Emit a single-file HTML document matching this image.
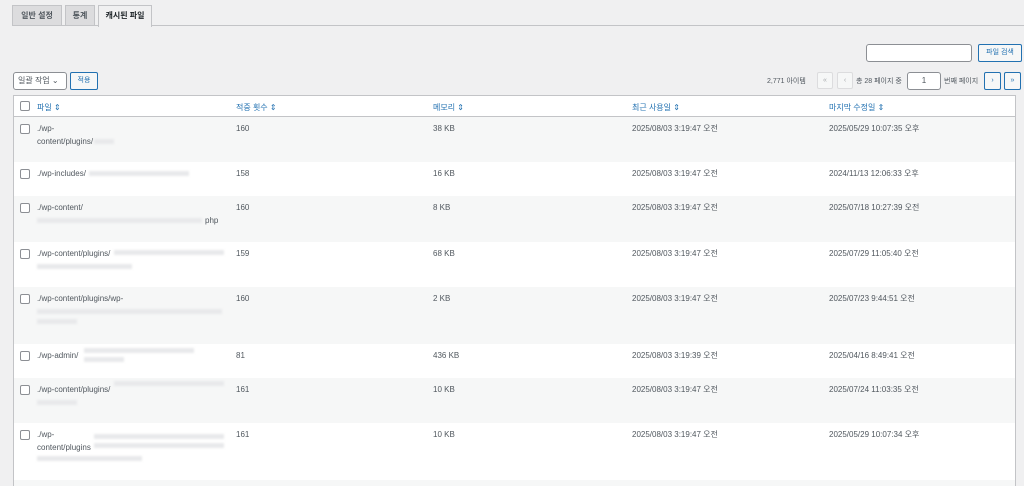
<!DOCTYPE html><html><head><meta charset="utf-8"><style>
body{margin:0;width:1024px;height:486px;background:#f0f0f1;font-family:"Liberation Sans","Noto Sans CJK KR",sans-serif;font-size:8px;color:#50575e;position:relative;overflow:hidden}
.a{position:absolute}
.tab{position:absolute;top:5px;height:20px;border:1px solid #c3c4c7;border-bottom:none;background:#dcdcde;font-weight:bold;font-size:8px;line-height:20px;text-align:center;color:#50575e}
.btn{position:absolute;border:1px solid #2271b1;border-radius:2px;background:#f6f7f7;color:#2271b1;text-align:center;font-size:7px}
.dis{position:absolute;border:1px solid #dcdcde;background:#f6f7f7;color:#a7aaad;text-align:center;font-size:7px;line-height:15px;width:14px;height:15px;border-radius:2px}
.row{position:absolute;left:14px;width:1001px}
.cb{position:absolute;left:6px;width:8px;height:8px;border:1px solid #8c8f94;border-radius:2px;background:#fff}
.c{position:absolute;line-height:13px}
.blur{position:absolute;height:5px;background:#e8e9eb;filter:blur(1px)}
.h{color:#2271b1;position:absolute;top:6px}
</style></head><body>
<div class="tab" style="left:12px;width:48px">일반 설정</div>
<div class="tab" style="left:65px;width:28px">통계</div>
<div class="tab" style="left:98px;width:52px;background:#f0f0f1;color:#1d2327;height:21px;z-index:2">캐시된 파일</div>
<div class="a" style="left:12px;right:0;top:25px;border-top:1px solid #c3c4c7"></div>
<div class="a" style="left:866px;top:44px;width:104px;height:16px;border:1px solid #8c8f94;border-radius:3px;background:#fff"></div>
<div class="btn" style="left:978px;top:44px;width:42px;height:16px;line-height:16px">파일 검색</div>
<div class="a" style="left:13px;top:72px;border:1px solid #8c8f94;border-radius:3px;background:#fff;line-height:16px;padding-left:4px;box-sizing:border-box;width:54px;height:18px">일괄 작업 ⌄</div>
<div class="btn" style="left:70px;top:72px;width:26px;height:16px;line-height:16px">적용</div>
<div class="a" style="left:767px;top:76px;font-size:7px">2,771 아이템</div>
<div class="dis" style="left:817px;top:72px">«</div>
<div class="dis" style="left:837px;top:72px">‹</div>
<div class="a" style="left:856px;top:76px;font-size:7px">총 28 페이지 중</div>
<div class="a" style="left:907px;top:72px;width:32px;height:16px;border:1px solid #8c8f94;border-radius:3px;background:#fff;text-align:center;line-height:16px">1</div>
<div class="a" style="left:944px;top:76px;font-size:7px">번째 페이지</div>
<div class="btn" style="left:984px;top:72px;width:15px;height:16px;line-height:16px">›</div>
<div class="btn" style="left:1004px;top:72px;width:15px;height:16px;line-height:16px">»</div>
<div class="a" style="left:13px;top:95px;width:1003px;height:391px;border:1px solid #c3c4c7;background:#fff;box-sizing:border-box"></div>
<div class="row" style="top:96px;height:20px;border-bottom:1px solid #c3c4c7">
<div class="cb" style="top:5px"></div>
<span class="h" style="left:23px">파일 ⇕</span><span class="h" style="left:222px">적중 횟수 ⇕</span><span class="h" style="left:419px">메모리 ⇕</span><span class="h" style="left:618px">최근 사용일 ⇕</span><span class="h" style="left:815px">마지막 수정일 ⇕</span></div>

<div class="row" style="top:117px;height:45px;background:#f6f7f7"><div class="cb" style="top:7px"></div><div class="c" style="left:23px;top:5px">./wp-<br>content/plugins/</div><div class="blur" style="left:80px;top:22px;width:20px"></div><div class="c" style="left:222px;top:5px">160</div><div class="c" style="left:419px;top:5px">38 KB</div><div class="c" style="left:618px;top:5px">2025/08/03 3:19:47 오전</div><div class="c" style="left:815px;top:5px">2025/05/29 10:07:35 오후</div></div>
<div class="row" style="top:162px;height:34px"><div class="cb" style="top:7px"></div><div class="c" style="left:23px;top:5px">./wp-includes/</div><div class="blur" style="left:75px;top:9px;width:100px"></div><div class="c" style="left:222px;top:5px">158</div><div class="c" style="left:419px;top:5px">16 KB</div><div class="c" style="left:618px;top:5px">2025/08/03 3:19:47 오전</div><div class="c" style="left:815px;top:5px">2024/11/13 12:06:33 오후</div></div>
<div class="row" style="top:196px;height:46px;background:#f6f7f7"><div class="cb" style="top:7px"></div><div class="c" style="left:23px;top:5px">./wp-content/<br><span style="margin-left:168px">php</span></div><div class="blur" style="left:23px;top:22px;width:165px"></div><div class="c" style="left:222px;top:5px">160</div><div class="c" style="left:419px;top:5px">8 KB</div><div class="c" style="left:618px;top:5px">2025/08/03 3:19:47 오전</div><div class="c" style="left:815px;top:5px">2025/07/18 10:27:39 오전</div></div>
<div class="row" style="top:242px;height:45px"><div class="cb" style="top:7px"></div><div class="c" style="left:23px;top:5px">./wp-content/plugins/</div><div class="blur" style="left:23px;top:22px;width:95px"></div><div class="blur" style="left:100px;top:8px;width:110px"></div><div class="c" style="left:222px;top:5px">159</div><div class="c" style="left:419px;top:5px">68 KB</div><div class="c" style="left:618px;top:5px">2025/08/03 3:19:47 오전</div><div class="c" style="left:815px;top:5px">2025/07/29 11:05:40 오전</div></div>
<div class="row" style="top:287px;height:57px;background:#f6f7f7"><div class="cb" style="top:7px"></div><div class="c" style="left:23px;top:5px">./wp-content/plugins/wp-</div><div class="blur" style="left:23px;top:22px;width:185px"></div><div class="blur" style="left:23px;top:32px;width:40px"></div><div class="c" style="left:222px;top:5px">160</div><div class="c" style="left:419px;top:5px">2 KB</div><div class="c" style="left:618px;top:5px">2025/08/03 3:19:47 오전</div><div class="c" style="left:815px;top:5px">2025/07/23 9:44:51 오전</div></div>
<div class="row" style="top:344px;height:34px"><div class="cb" style="top:7px"></div><div class="c" style="left:23px;top:5px">./wp-admin/</div><div class="blur" style="left:70px;top:4px;width:110px"></div><div class="blur" style="left:70px;top:13px;width:40px"></div><div class="c" style="left:222px;top:5px">81</div><div class="c" style="left:419px;top:5px">436 KB</div><div class="c" style="left:618px;top:5px">2025/08/03 3:19:39 오전</div><div class="c" style="left:815px;top:5px">2025/04/16 8:49:41 오전</div></div>
<div class="row" style="top:378px;height:45px;background:#f6f7f7"><div class="cb" style="top:7px"></div><div class="c" style="left:23px;top:5px">./wp-content/plugins/</div><div class="blur" style="left:100px;top:3px;width:110px"></div><div class="blur" style="left:23px;top:22px;width:40px"></div><div class="c" style="left:222px;top:5px">161</div><div class="c" style="left:419px;top:5px">10 KB</div><div class="c" style="left:618px;top:5px">2025/08/03 3:19:47 오전</div><div class="c" style="left:815px;top:5px">2025/07/24 11:03:35 오전</div></div>
<div class="row" style="top:423px;height:57px"><div class="cb" style="top:7px"></div><div class="c" style="left:23px;top:5px">./wp-<br>content/plugins</div><div class="blur" style="left:80px;top:11px;width:130px"></div><div class="blur" style="left:80px;top:20px;width:130px"></div><div class="blur" style="left:23px;top:33px;width:105px"></div><div class="c" style="left:222px;top:5px">161</div><div class="c" style="left:419px;top:5px">10 KB</div><div class="c" style="left:618px;top:5px">2025/08/03 3:19:47 오전</div><div class="c" style="left:815px;top:5px">2025/05/29 10:07:34 오후</div></div>
<div class="row" style="top:480px;height:6px;background:#f6f7f7"></div>
</body></html>
